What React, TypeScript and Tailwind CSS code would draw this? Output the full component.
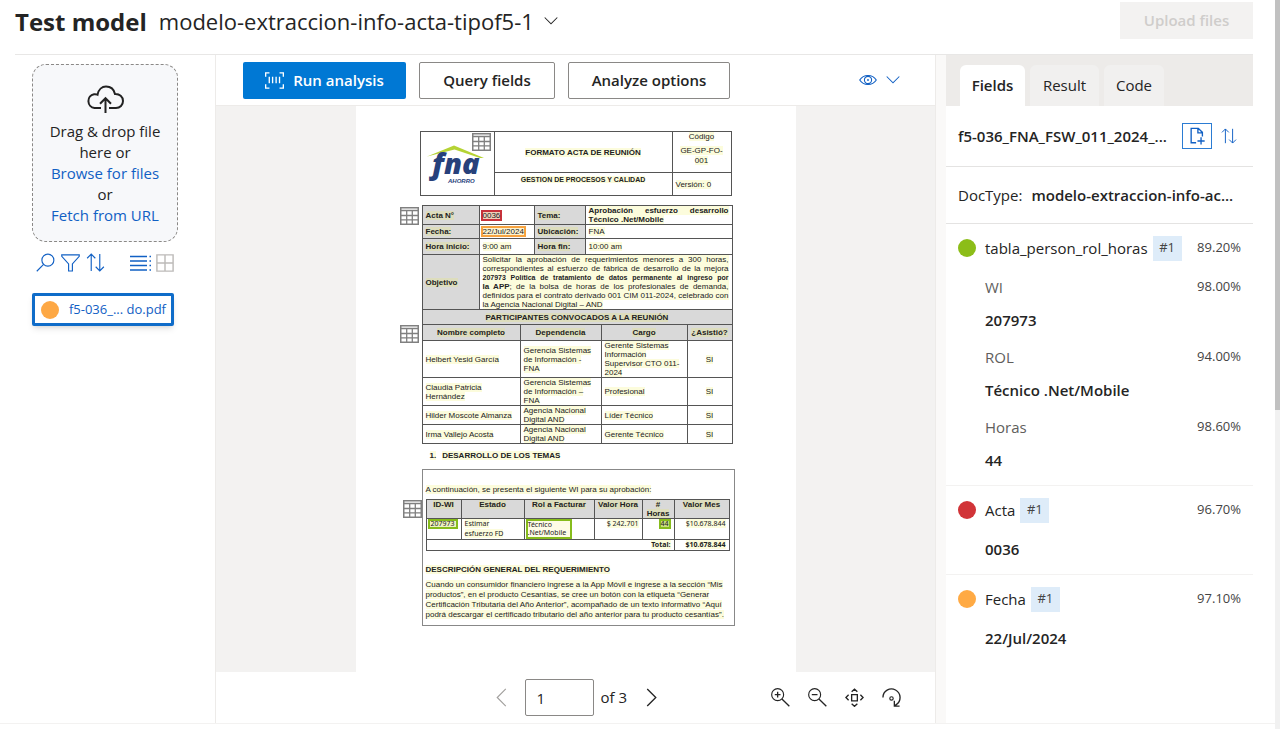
import type { ReactNode } from "react";

function Svg({ size, className, children }: { size: string; className?: string; children: ReactNode }) {
  return (
    <svg viewBox="0 0 20 20" fill="none" stroke="currentColor" strokeWidth="1.2" aria-hidden="true" className={`${size} shrink-0 ${className ?? ""}`}>
      {children}
    </svg>
  );
}

const SortIcon = ({ size }: { size: string }) => (
  <Svg size={size}>
    <path d="M5.5 19V1.2M1.2 5.5l4.3-4.3 4.3 4.3M14.5 1v17.8M10.2 14.5l4.3 4.3 4.3-4.3" />
  </Svg>
);

const ChevronDown = ({ size }: { size: string }) => (
  <Svg size={size}>
    <path d="M1 5l9 9 9-9" strokeWidth="1.5" />
  </Svg>
);

function TableBadge({ place }: { place: string }) {
  return (
    <svg viewBox="0 0 19 18" className={`absolute h-[18px] w-[19px] text-[#808080] ${place}`} fill="none" stroke="currentColor" aria-hidden="true">
      <rect x="0.75" y="0.75" width="17.5" height="16.5" strokeWidth="1.5" />
      <path d="M1 3.5h17M1 8.5h17M1 12.8h17M6.7 3.5V17M12.3 3.5V17" strokeWidth="1.3" />
    </svg>
  );
}

const H = ({ children }: { children: ReactNode }) => <span className="bg-[#f0f050]/20">{children}</span>;

function Lines({ items }: { items: ReactNode[] }) {
  return (
    <>
      {items.map((line, i) => (
        <span key={i} className={`block whitespace-nowrap ${i < items.length - 1 ? "[text-align-last:justify]" : ""}`}>
          <H>{line}</H>
        </span>
      ))}
    </>
  );
}

const cell = "border border-[#555] px-[3px] py-0";
const head = "border border-[#555] bg-[#d9d9d9] px-[3px] py-0 font-bold";

function FormHeader() {
  return (
    <div className="relative w-[312px]">
      <table className="w-full table-fixed border-collapse">
        <colgroup>
          <col className="w-[74px]" />
          <col />
          <col className="w-[59px]" />
        </colgroup>
        <tbody>
          <tr className="h-[41px]">
            <td rowSpan={2} className="border border-[#555] p-0">
              <svg viewBox="0 0 60 44" className="ml-[5px] h-[44px] w-[60px]" role="img" aria-label="fna ahorro">
                <path d="M1 14.500L28 3.500L58 16L54 16L28.500 7.500L7 13z" fill="#b5d334" />
                <text x="6" y="32" fontFamily="Open Sans, sans-serif" fontWeight="800" fontStyle="italic" fontSize="29" fill="#27417b">fna</text>
                <text x="22" y="41" fontFamily="Liberation Sans, sans-serif" fontWeight="700" fontStyle="italic" fontSize="6" fill="#27417b">AHORRO</text>
              </svg>
            </td>
            <td className={`${cell} text-center font-bold`}><H>FORMATO ACTA DE REUNIÓN</H></td>
            <td className={`${cell} text-center align-top`}>
              <div><H>Código</H></div>
              <div className="mt-[5px] leading-[10px]"><H>GE-GP-FO-<br />001</H></div>
            </td>
          </tr>
          <tr className="h-[23px]">
            <td className={`${cell} pt-[2px] text-center align-top text-[7px] font-bold`}><H>GESTION DE PROCESOS Y CALIDAD</H></td>
            <td className={cell}><H>Versión: 0</H></td>
          </tr>
        </tbody>
      </table>
      <TableBadge place="left-[52px] top-[2px]" />
    </div>
  );
}

function MeetingData() {
  return (
    <div className="relative mt-[9px] ml-[2px] w-[311px]">
      <table className="w-full table-fixed border-collapse">
        <colgroup>
          <col className="w-[57px]" />
          <col className="w-[55px]" />
          <col className="w-[51px]" />
          <col />
        </colgroup>
        <tbody>
          <tr className="h-[19px]">
            <th scope="row" className={`${head} text-left`}><H>Acta N°</H></th>
            <td className="border border-[#555] px-px py-0"><mark className="block w-[21px] border-2 border-[#c8323a] bg-[#f0d0b8] text-center leading-[7px] text-inherit">0036</mark></td>
            <th scope="row" className={`${head} text-left`}><H>Tema:</H></th>
            <td className={`${cell} font-bold`}>
              <span className="block whitespace-nowrap [text-align-last:justify]"><H>Aprobación esfuerzo desarrollo</H></span>
              <H>Técnico .Net/Mobile</H>
            </td>
          </tr>
          <tr className="h-[14px]">
            <th scope="row" className={`${head} text-left`}><H>Fecha:</H></th>
            <td className="border border-[#555] px-px py-0"><mark className="block w-[45px] border-2 border-[#f7a23e] bg-[#fcf3cf] text-center leading-[7px] whitespace-nowrap text-inherit">22/Jul/2024</mark></td>
            <th scope="row" className={`${head} text-left`}><H>Ubicación:</H></th>
            <td className={cell}><H>FNA</H></td>
          </tr>
          <tr className="h-[16px]">
            <th scope="row" className={`${head} text-left whitespace-nowrap`}><H>Hora inicio:</H></th>
            <td className={cell}><H>9:00 am</H></td>
            <th scope="row" className={`${head} text-left`}><H>Hora fin:</H></th>
            <td className={cell}><H>10:00 am</H></td>
          </tr>
          <tr className="h-[54px]">
            <th scope="row" className={`${head} text-left`}><H>Objetivo</H></th>
            <td colSpan={3} className={cell}>
              <Lines
                items={[
                  "Solicitar la aprobación de requerimientos menores a 300 horas,",
                  "correspondientes al esfuerzo de fábrica de desarrollo de la mejora",
                  <b key="a" className="text-[7px]">207973 Política de tratamiento de datos permanente al ingreso por</b>,
                  <span key="b"><b>la APP</b>; de la bolsa de horas de los profesionales de demanda,</span>,
                  "definidos para el contrato derivado 001 CIM 011-2024, celebrado con",
                  "la Agencia Nacional Digital – AND",
                ]}
              />
            </td>
          </tr>
        </tbody>
      </table>
      <TableBadge place="top-[2px] left-[-22px]" />
    </div>
  );
}

const people: { name: ReactNode; dep: ReactNode; role: ReactNode; height: string }[] = [
  { name: "Helbert Yesid García", dep: <>Gerencia Sistemas<br />de Información -<br />FNA</>, role: <>Gerente Sistemas<br />Información<br />Supervisor CTO 011-<br />2024</>, height: "h-[37px]" },
  { name: <>Claudia Patricia<br />Hernández</>, dep: <>Gerencia Sistemas<br />de Información –<br />FNA</>, role: "Profesional", height: "h-[28px]" },
  { name: "Hilder Moscote Almanza", dep: <>Agencia Nacional<br />Digital AND</>, role: "Líder Técnico", height: "h-[18px]" },
  { name: "Irma Vallejo Acosta", dep: <>Agencia Nacional<br />Digital AND</>, role: "Gerente Técnico", height: "h-[18px]" },
];

function Participants() {
  return (
    <div className="relative -mt-px ml-[2px] w-[311px]">
      <table className="w-full table-fixed border-collapse">
        <colgroup>
          <col className="w-[98px]" />
          <col className="w-[81px]" />
          <col className="w-[86px]" />
          <col />
        </colgroup>
        <thead>
          <tr className="h-[15px]">
            <th colSpan={4} className={head}><H>PARTICIPANTES CONVOCADOS A LA REUNIÓN</H></th>
          </tr>
          <tr className="h-[16px]">
            {["Nombre completo", "Dependencia", "Cargo", "¿Asistió?"].map((t) => (
              <th key={t} scope="col" className={head}><H>{t}</H></th>
            ))}
          </tr>
        </thead>
        <tbody>
          {people.map((p, i) => (
            <tr key={i} className={p.height}>
              <td className={`${cell} whitespace-nowrap`}><H>{p.name}</H></td>
              <td className={`${cell} whitespace-nowrap`}><H>{p.dep}</H></td>
              <td className={`${cell} whitespace-nowrap`}><H>{p.role}</H></td>
              <td className={`${cell} text-center`}><H>SI</H></td>
            </tr>
          ))}
        </tbody>
      </table>
      <TableBadge place="top-[16px] left-[-22px]" />
    </div>
  );
}

function CostTable() {
  return (
    <div className="relative mt-[5px] w-[304px]">
      <table className="w-full table-fixed border-collapse">
        <colgroup>
          <col className="w-[35px]" />
          <col className="w-[63px]" />
          <col className="w-[70px]" />
          <col className="w-[48px]" />
          <col className="w-[32px]" />
          <col />
        </colgroup>
        <thead>
          <tr className="h-[19px]">
            {["ID-WI", "Estado", "Rol a Facturar", "Valor Hora", "#\nHoras", "Valor Mes"].map((t) => (
              <th key={t} scope="col" className="border border-[#555] bg-[#d9d9d9] p-0 align-top whitespace-pre-line"><H>{t}</H></th>
            ))}
          </tr>
        </thead>
        <tbody className="font-['Noto_Sans',sans-serif] text-[7px] leading-[10px]">
          <tr className="h-[21px] align-top">
            <td className="border border-[#555] px-px py-0"><mark className="block w-[30px] border-2 border-[#86bc1c] bg-[#eef2c0] text-center leading-[6px] text-inherit">207973</mark></td>
            <td className={cell}><H>Estimar<br />esfuerzo FD</H></td>
            <td className="border border-[#555] px-px py-0"><mark className="block w-[46px] border-2 border-[#86bc1c] bg-[#fefce6] leading-[8px] text-inherit">Técnico<br />.Net/Mobile</mark></td>
            <td className={`${cell} text-right`}><H>$ 242.701</H></td>
            <td className={cell}><mark className="ml-auto block w-[12px] border-2 border-[#86bc1c] bg-[#c9dd80] text-center leading-[6px] text-inherit">44</mark></td>
            <td className={`${cell} text-right`}><H>$10.678.844</H></td>
          </tr>
          <tr className="h-[11px] font-bold">
            <td colSpan={5} className={`${cell} text-right`}><H>Total:</H></td>
            <td className={`${cell} text-right`}><H>$10.678.844</H></td>
          </tr>
        </tbody>
      </table>
      <TableBadge place="top-[1px] left-[-23px]" />
    </div>
  );
}

function DocumentPage() {
  return (
    <article className="w-[440px] self-stretch bg-white pt-[25px] pl-[64px] font-['Liberation_Sans',Arial,sans-serif] text-[8px] leading-[9px] text-[#222]">
      <FormHeader />
      <MeetingData />
      <Participants />
      <h2 className="mt-[7px] ml-[10px] flex gap-[6px] font-bold"><H>1.</H><H>DESARROLLO DE LOS TEMAS</H></h2>
      <section className="mt-[9px] ml-[2px] w-[313px] border border-[#888] px-[3px] pt-[15px] pb-[5px]">
        <p><H>A continuación, se presenta el siguiente WI para su aprobación:</H></p>
        <CostTable />
        <h3 className="mt-[14px] font-bold"><H>DESCRIPCIÓN GENERAL DEL REQUERIMIENTO</H></h3>
        <p className="mt-[6px] leading-[10px] whitespace-nowrap">
          <H>
            Cuando un consumidor financiero ingrese a la App Móvil e ingrese a la sección “Mis<br />
            productos”, en el producto Cesantías, se cree un botón con la etiqueta “Generar<br />
            Certificación Tributaria del Año Anterior”, acompañado de un texto informativo “Aquí<br />
            podrá descargar el certificado tributario del año anterior para tu producto cesantías”.
          </H>
        </p>
      </section>
    </article>
  );
}

function Sidebar() {
  return (
    <aside className="w-[200px] shrink-0 pt-[9px] pr-[37px] pl-[17px]">
      <div className="flex h-[178px] flex-col items-center rounded-[14px] border border-dashed border-[#8a8886] bg-[#f7f8fa] pt-[20px] text-center text-[15px] leading-[21px]">
        <svg viewBox="0 0 38 28" className="h-[28px] w-[38px]" fill="none" stroke="#222" strokeWidth="2" aria-hidden="true">
          <path d="M15 23H8.5A7 7 0 0 1 8 9.200C9.500 9 10.500 9.200 11.500 9.700 12.500 4.500 16 1.500 20 1.500c4.500 0 8 3 9 7.500 4.500-.3 8 2.800 8 7 0 4-3 7-7 7h-7" />
          <path d="M19.500 28V13.500M14 18.700l5.500-5.500 5.500 5.500" />
        </svg>
        <p className="mt-[8px]">Drag &amp; drop file<br />here or</p>
        <a href="#browse" className="text-[#1160c4]">Browse for files</a>
        <span>or</span>
        <a href="#fetch" className="text-[#1160c4]">Fetch from URL</a>
      </div>
      <div className="mt-[11px] flex items-center pl-[4px] text-[#1160c4]">
        <button type="button" aria-label="Search">
          <Svg size="size-[19px]"><circle cx="12.500" cy="7.500" r="6.300" /><path d="M8 12L.8 19.200" /></Svg>
        </button>
        <button type="button" aria-label="Filter" className="ml-[6px]">
          <Svg size="size-[19px]"><path d="M.8 2h18.400v1.500L12 11.500V19H8v-7.500L.8 3.500z" /></Svg>
        </button>
        <button type="button" aria-label="Sort" className="ml-[6px]"><SortIcon size="size-[19px]" /></button>
        <button type="button" aria-label="List view" className="ml-auto">
          <svg viewBox="0 0 22 16" className="h-[16px] w-[22px]" stroke="currentColor" strokeWidth="1.300" aria-hidden="true">
            <path d="M0 1.500h17M0 6h17M0 10.500h17M0 15h17" />
            <path d="M19.500 1.500h1.500M19.500 6h1.500M19.500 10.500h1.500M19.500 15h1.500" />
          </svg>
        </button>
        <button type="button" aria-label="Grid view" className="mr-[4px] ml-[4px] text-[#bdbbb9]">
          <Svg size="size-[18px]"><path d="M1 1h18v18H1zM10 1v18M1 10h18" strokeWidth="1.600" /></Svg>
        </button>
      </div>
      <button type="button" className="mt-[21px] flex h-[33px] w-[142px] items-center rounded-[2px] border-3 border-[#0f6cc9] pr-[5px] pl-[6px] text-[13px] whitespace-nowrap text-[#1160c4] shadow-md">
        <span className="size-[18px] shrink-0 rounded-full bg-[#fda845]" />
        <span className="ml-auto">f5-036_... do.pdf</span>
      </button>
    </aside>
  );
}

function Viewer() {
  const outline = "h-[37px] rounded-[2px] border border-[#8a8886] text-[15px] font-semibold";
  return (
    <main className="flex min-w-0 flex-1 flex-col border-x border-[#edebe9]">
      <div className="flex h-[51px] items-center gap-[13px] border-b border-[#edebe9] pr-[35px] pl-[27px]">
        <button type="button" className="flex h-[37px] w-[163px] items-center justify-center gap-[9px] rounded-[2px] bg-[#0078d4] text-[15px] font-semibold text-white">
          <Svg size="size-[19px]">
            <path d="M.7 6V2h4M15.300 2h4v4M19.300 14v4h-4M4.700 18h-4v-4" strokeWidth="1.400" />
            <path d="M4.500 6v7M8 6v7M11.700 6v7M15.300 6v7" strokeWidth="1.400" />
          </Svg>
          Run analysis
        </button>
        <button type="button" className={`${outline} w-[136px]`}>Query fields</button>
        <button type="button" className={`${outline} w-[162px]`}>Analyze options</button>
        <button type="button" aria-label="View options" className="ml-auto flex items-center gap-[9px] text-[#1160c4]">
          <Svg size="size-[18px]">
            <path d="M.8 10C3 6.500 6.300 5 10 5s7 1.500 9.200 5c-2.200 3.500-5.500 5-9.200 5S3 13.500.8 10z" />
            <circle cx="10" cy="10" r="4" />
            <circle cx="10" cy="10" r="1" fill="currentColor" stroke="none" />
          </Svg>
          <ChevronDown size="size-[14px]" />
        </button>
      </div>
      <div className="flex flex-1 justify-center bg-[#f3f2f1]">
        <DocumentPage />
      </div>
      <div className="flex h-[51px] items-center pr-[34px] text-[15px]">
        <div className="ml-auto flex items-center">
          <button type="button" aria-label="Previous page" className="text-[#a19f9d]"><Svg size="size-[19px]"><path d="M14.500 1l-9 9 9 9" /></Svg></button>
          <input aria-label="Page number" defaultValue="1" className="ml-[14px] h-[37px] w-[69px] rounded-[2px] border border-[#8a8886] px-[10px]" />
          <span className="ml-[6px]">of 3</span>
          <button type="button" aria-label="Next page" className="ml-[15px]"><Svg size="size-[19px]"><path d="M5.500 1l9 9-9 9" strokeWidth="1.400" /></Svg></button>
        </div>
        <div className="ml-[110px] flex gap-[18px]">
          <button type="button" aria-label="Zoom in"><Svg size="size-[19px]"><circle cx="7" cy="7" r="6.300" /><path d="M11.500 11.500l7.800 7.800M4 7h6M7 4v6" strokeWidth="1.400" /></Svg></button>
          <button type="button" aria-label="Zoom out"><Svg size="size-[19px]"><circle cx="7" cy="7" r="6.300" /><path d="M11.500 11.500l7.800 7.800M4 7h6" strokeWidth="1.400" /></Svg></button>
          <button type="button" aria-label="Fit to page"><Svg size="size-[19px]"><path d="M7 7h6v6.500H7zM7 4l3-2.800L13 4M7 16.500l3 2.800 3-2.800M3.800 7.200L1 10l2.800 2.800M16.200 7.200L19 10l-2.800 2.800" strokeWidth="1.400" /></Svg></button>
          <button type="button" aria-label="Rotate"><Svg size="size-[19px]"><path d="M1 10a9 9 0 1 1 14 7.500l-1.500 1.300M13 13.500v5.500h5.500" strokeWidth="1.400" /><circle cx="10" cy="11" r="1.800" /></Svg></button>
        </div>
      </div>
    </main>
  );
}

type Entry = { label?: string; value: string; score?: string };
const fields: { name: string; color: string; score: string; entries: Entry[] }[] = [
  {
    name: "tabla_person_rol_horas", color: "bg-[#8cbd18]", score: "89.20%",
    entries: [
      { label: "WI", value: "207973", score: "98.00%" },
      { label: "ROL", value: "Técnico .Net/Mobile", score: "94.00%" },
      { label: "Horas", value: "44", score: "98.60%" },
    ],
  },
  { name: "Acta", color: "bg-[#d13438]", score: "96.70%", entries: [{ value: "0036" }] },
  { name: "Fecha", color: "bg-[#ffaa44]", score: "97.10%", entries: [{ value: "22/Jul/2024" }] },
];

function Results() {
  const tab = "h-[41px] rounded-t-[6px] text-[15px]";
  return (
    <aside className="w-[307px] shrink-0 text-[15px]">
      <div role="tablist" className="flex h-[51px] items-end gap-[5px] bg-[#edebe9] pl-[14px]">
        <button type="button" role="tab" aria-selected="true" className={`${tab} w-[65px] bg-white font-semibold`}>Fields</button>
        <button type="button" role="tab" aria-selected="false" className={`${tab} w-[69px] bg-[#f1f0ef]`}>Result</button>
        <button type="button" role="tab" aria-selected="false" className={`${tab} w-[60px] bg-[#f1f0ef]`}>Code</button>
      </div>
      <div className="flex h-[61px] items-center border-b border-[#e4e3e2] pr-[16px] pl-[12px]">
        <h2 className="whitespace-nowrap font-semibold">f5-036_FNA_FSW_011_2024_...</h2>
        <button type="button" aria-label="Add to dataset" className="ml-auto flex h-[26px] w-[30px] items-center justify-center border border-[#2b7cd3] text-[#1160c4]">
          <Svg size="size-[18px]"><path d="M9 17.500H3.500v-16h8L16 6v4.500M11 1.500V6.500h5M14.500 11.500v8M10.500 15.500h8" strokeWidth="1.500" /></Svg>
        </button>
        <button type="button" aria-label="Sort fields" className="ml-[9px] text-[#1160c4]"><SortIcon size="size-[16px]" /></button>
      </div>
      <div className="flex h-[57px] items-center gap-[9px] border-b border-[#e4e3e2] px-[12px] whitespace-nowrap">
        <span>DocType:</span>
        <span className="font-semibold">modelo-extraccion-info-ac...</span>
      </div>
      {fields.map((f) => (
        <section key={f.name} className="border-b border-[#f3f2f1] px-[12px] py-[11px] last:border-0">
          <header className="flex h-[26px] items-center">
            <span className={`size-[18px] shrink-0 rounded-full ${f.color}`} />
            <h3 className="ml-[9px] whitespace-nowrap">{f.name}</h3>
            <span className="ml-[5px] flex h-[25px] w-[29px] shrink-0 items-center justify-center bg-[#deecf9] text-[13px] text-[#444]">#1</span>
            <span className="ml-auto text-[13px] text-[#444]">{f.score}</span>
          </header>
          <div className="mt-[12px] ml-[27px] flex flex-col gap-[9px]">
            {f.entries.map((e) => (
              <div key={e.value} className="flex flex-col gap-[5px]">
                {e.label && (
                  <div className="flex h-[28px] items-center justify-between text-[#605e5c]">
                    <span>{e.label}</span>
                    <span className="text-[13px] text-[#444]">{e.score}</span>
                  </div>
                )}
                <div className="flex h-[28px] items-center font-semibold">{e.value}</div>
              </div>
            ))}
          </div>
        </section>
      ))}
    </aside>
  );
}

export default function App() {
  return (
    <div className="flex min-h-screen bg-white font-['Open_Sans','Noto_Sans',sans-serif] text-[#242424]">
      <div className="flex min-w-0 flex-1 flex-col pb-[5px]">
        <header className="mr-[22px] ml-[15px] flex h-[54px] items-start">
          <h1 className="text-[24px] leading-[44px] font-bold">Test model</h1>
          <button type="button" className="ml-[12px] flex items-center gap-[10px] text-[22px] leading-[42px]">
            modelo-extraccion-info-acta-tipof5-1
            <ChevronDown size="size-[14px]" />
          </button>
          <button type="button" disabled className="mt-[2px] ml-auto h-[37px] w-[133px] bg-[#f3f2f1] text-[15px] font-semibold text-[#cfcdcb]">Upload files</button>
        </header>
        <div className="flex flex-1 border-b border-[#f3f2f1] pr-[22px] pl-[15px]">
          <div className="flex min-w-0 flex-1 border-t border-[#e8e7e6]">
            <Sidebar />
            <Viewer />
            <div className="w-[10px] shrink-0 bg-[#faf9f8]" />
            <Results />
          </div>
        </div>
      </div>
      <div className="w-[5px] shrink-0 bg-[#f1f1f1]">
        <div className="h-[410px] bg-[#c1c1c1]" />
      </div>
    </div>
  );
}
